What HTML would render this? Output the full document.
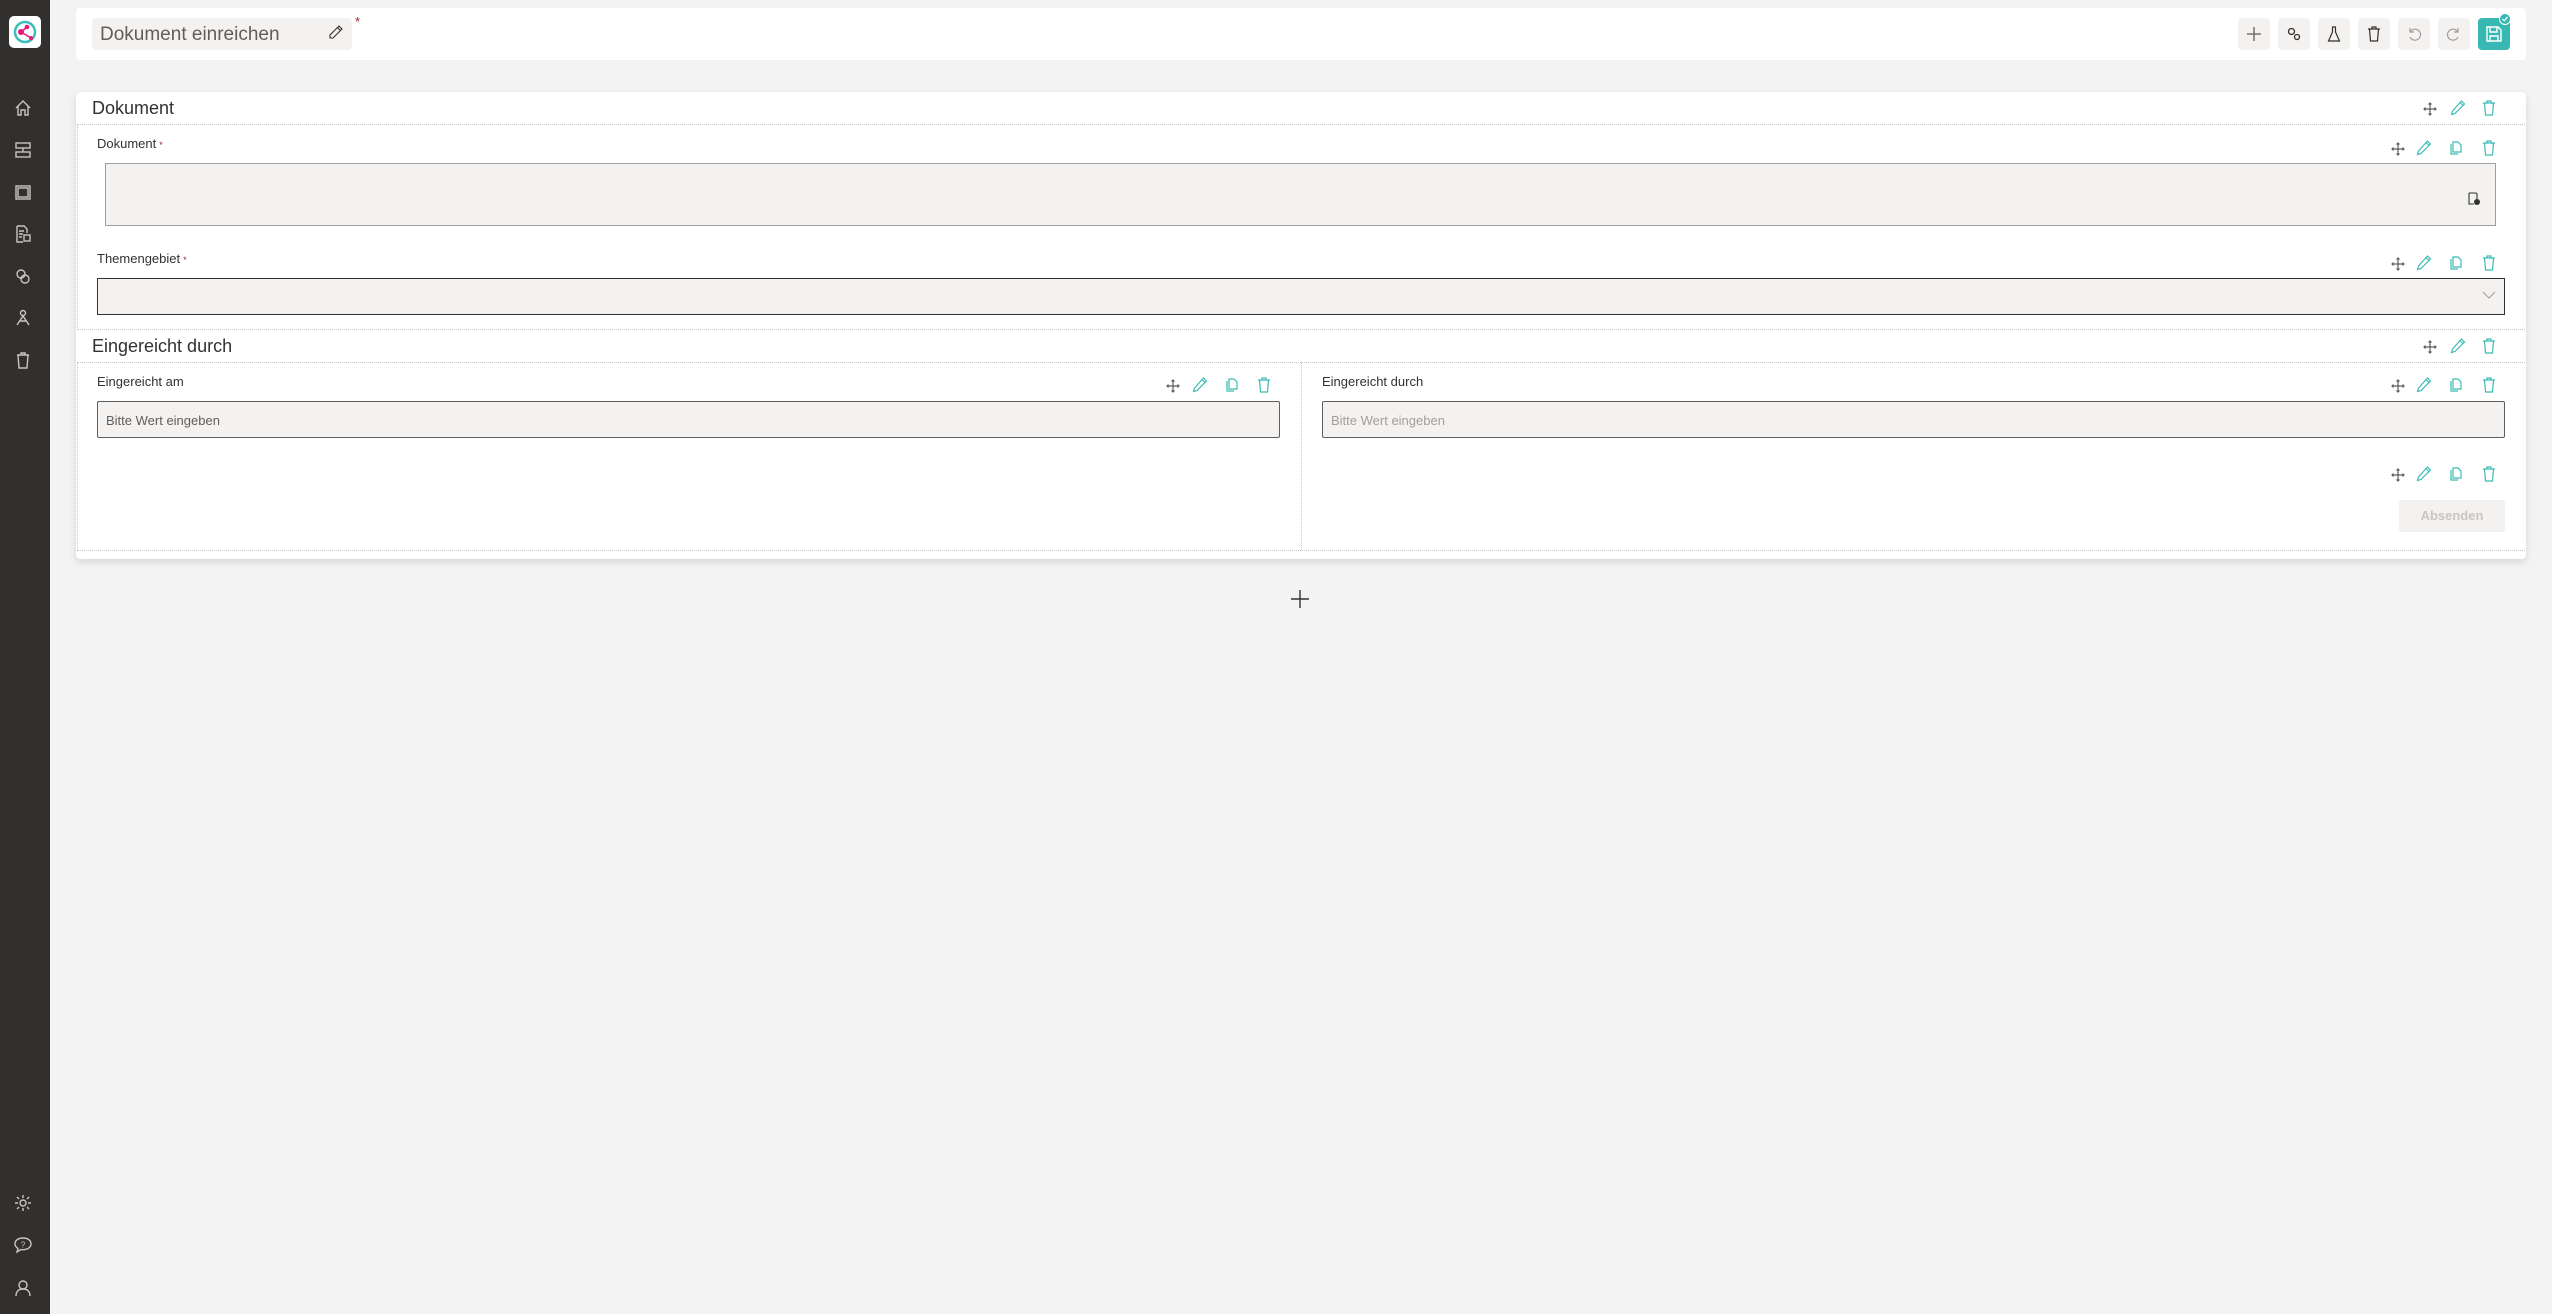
<!DOCTYPE html>
<html><head><meta charset="utf-8">
<style>
*{box-sizing:border-box;margin:0;padding:0}
body{width:2552px;height:1314px;background:#f3f3f3;font-family:"Liberation Sans",sans-serif;position:relative;overflow:hidden;color:#323130}
.abs{position:absolute}
#side{left:0;top:0;width:50px;height:1314px;background:#31302e}
.si{position:absolute;left:13px;width:20px;height:20px}
.tb{position:absolute;top:18px;width:32px;height:32px;border-radius:4px;background:#f3f2f1;display:flex;align-items:center;justify-content:center}
.ic{position:absolute;width:18px;height:18px}
.lbl{position:absolute;font-size:13px;color:#323130}
.req{color:#a4262c;font-size:9px;vertical-align:middle;margin-left:3px}
.dh{position:absolute;height:0;border-top:1px dotted #c8c6c4}
.dv{position:absolute;width:0;border-left:1px dotted #c8c6c4}
</style></head><body>
<div id="side" class="abs">
 <div class="abs" style="left:9px;top:16px;width:32px;height:32px;background:#fff;border-radius:5px">
  <svg width="32" height="32" viewBox="0 0 32 32"><circle cx="16" cy="16" r="10" fill="none" stroke="#3bbfb8" stroke-width="2.5"/><circle cx="12" cy="16" r="3" fill="#e6197a"/><circle cx="18" cy="11" r="2.3" fill="#e6197a"/><circle cx="22" cy="22" r="2" fill="#e6197a"/><path d="M12 16L18 11M12 16L22 22" stroke="#e6197a" stroke-width="1.5"/></svg>
 </div>
 <svg class="si" style="top:98px" viewBox="0 0 20 20" fill="none" stroke="#c8c6c4" stroke-width="1.4"><path d="M3 10L10 3L17 10M5 8V17H8V12H12V17H15V8"/></svg>
 <svg class="si" style="top:140px" viewBox="0 0 20 20" fill="none" stroke="#c8c6c4" stroke-width="1.4"><rect x="3" y="3" width="14" height="5"/><rect x="3" y="12" width="14" height="5"/><path d="M10 8V12"/></svg>
 <svg class="si" style="top:182px" viewBox="0 0 20 20" fill="none" stroke="#c8c6c4" stroke-width="1.4"><rect x="3" y="4" width="14" height="13"/><rect x="5" y="6" width="10" height="9"/></svg>
 <svg class="si" style="top:224px" viewBox="0 0 20 20" fill="none" stroke="#c8c6c4" stroke-width="1.4"><path d="M4 2H11L14 5V9M4 2V18H10M6 7H11M6 10H10M6 13H9"/><rect x="11" y="11" width="6" height="6"/></svg>
 <svg class="si" style="top:266px" viewBox="0 0 20 20" fill="none" stroke="#c8c6c4" stroke-width="1.4"><circle cx="8" cy="8" r="4"/><circle cx="12" cy="13" r="4"/></svg>
 <svg class="si" style="top:308px" viewBox="0 0 20 20" fill="none" stroke="#c8c6c4" stroke-width="1.4"><circle cx="10" cy="5" r="2.5"/><path d="M10 8L4 17M10 8L16 17M7 13H13"/></svg>
 <svg class="si" style="top:350px" viewBox="0 0 20 20" fill="none" stroke="#c8c6c4" stroke-width="1.4"><path d="M4 5H16M8 5V3H12V5M5 5L6 18H14L15 5"/></svg>
 <svg class="si" style="top:1193px" viewBox="0 0 20 20" fill="none" stroke="#c8c6c4" stroke-width="1.4"><circle cx="10" cy="10" r="3"/><path d="M10 2V5M10 15V18M2 10H5M15 10H18M4 4L6 6M14 14L16 16M4 16L6 14M14 6L16 4"/></svg>
 <svg class="si" style="top:1235px" viewBox="0 0 20 20" fill="none" stroke="#c8c6c4" stroke-width="1.4"><path d="M10 3C5 3 2 5.5 2 9C2 11 3.5 12.5 5 13.5L4 17L8 14.5C8.7 14.6 9.3 14.7 10 14.7C15 14.7 18 12 18 9C18 5.5 15 3 10 3Z"/><text x="10" y="12.5" font-size="8" text-anchor="middle" fill="#c8c6c4" stroke="none" font-family="Liberation Sans">?</text></svg>
 <svg class="si" style="top:1278px" viewBox="0 0 20 20" fill="none" stroke="#c8c6c4" stroke-width="1.4"><circle cx="10" cy="7" r="4"/><path d="M3 18C3 13 6 11 10 11C14 11 17 13 17 18"/></svg>
</div>

<!-- header -->
<div class="abs" style="left:76px;top:8px;width:2450px;height:52px;background:#fff;border-radius:4px"></div>
<div class="abs" style="left:92px;top:18px;width:260px;height:32px;background:#f3f2f1;border-radius:4px;font-size:19px;color:#605e5c;padding:6px 0 0 8px">Dokument einreichen</div>
<svg class="abs" style="left:328px;top:24px" width="16" height="16" viewBox="0 0 16 16" fill="none" stroke="#323130" stroke-width="1.1"><path d="M11 2L14 5L5 14L2 14L2 11Z M9.5 3.5L12.5 6.5"/></svg>
<div class="abs" style="left:355px;top:14px;color:#a4262c;font-size:13px">*</div>

<div class="tb" style="left:2238px"><svg width="18" height="18" viewBox="0 0 18 18" stroke="#605e5c" stroke-width="1.3"><path d="M9 2V16M2 9H16"/></svg></div>
<div class="tb" style="left:2278px"><svg width="18" height="18" viewBox="0 0 18 18" fill="none" stroke="#323130" stroke-width="1.3"><circle cx="6.5" cy="6.5" r="3"/><circle cx="12" cy="12" r="2.5"/></svg></div>
<div class="tb" style="left:2318px"><svg width="18" height="18" viewBox="0 0 18 18" fill="none" stroke="#323130" stroke-width="1.2"><path d="M7 2H11M7.5 2V7L3.5 16H14.5L10.5 7V2"/></svg></div>
<div class="tb" style="left:2358px"><svg width="18" height="18" viewBox="0 0 18 18" fill="none" stroke="#323130" stroke-width="1.2"><path d="M3 4H15M7 4V2H11V4M4.5 4L5.5 16H12.5L13.5 4"/></svg></div>
<div class="tb" style="left:2398px"><svg width="18" height="18" viewBox="0 0 18 18" fill="none" stroke="#a19f9d" stroke-width="1.2"><path d="M5 3V7H9M5.5 6.5A5.5 5.5 0 1 1 5 12"/></svg></div>
<div class="tb" style="left:2438px"><svg width="18" height="18" viewBox="0 0 18 18" fill="none" stroke="#a19f9d" stroke-width="1.2"><path d="M13 3V7H9M12.5 6.5A5.5 5.5 0 1 0 13 12"/></svg></div>
<div class="tb" style="left:2478px;background:#38b8b2"><svg width="20" height="20" viewBox="0 0 20 20" fill="none" stroke="#fff" stroke-width="1.4"><path d="M3 3H14L17 6V17H3Z M6 3V8H13V3 M6 17V12H14V17"/></svg></div>
<div class="abs" style="left:2499px;top:13px;width:12px;height:12px;border-radius:6px;background:#38b8b2;border:1px solid #fff"><svg width="10" height="10" viewBox="0 0 10 10" style="display:block" fill="none" stroke="#fff" stroke-width="1.3"><path d="M2.5 5L4.3 6.8L7.5 3"/></svg></div>

<!-- main card -->
<div class="abs" style="left:76px;top:92px;width:2450px;height:467px;background:#fff;border-radius:4px;box-shadow:0 3px 8px rgba(0,0,0,0.12)"></div>
<div class="abs" style="left:92px;top:98px;font-size:18px;color:#323130">Dokument</div>
<div class="dh" style="left:77px;top:124px;width:2448px"></div>
<div class="dv" style="left:77px;top:124px;height:206px"></div>

<div class="lbl" style="left:97px;top:136px">Dokument<span class="req">*</span></div>
<div class="abs" style="left:105px;top:163px;width:2391px;height:63px;background:#f3f2f1;border:1px solid #a19f9d"></div>
<svg class="abs" style="left:2467px;top:192px" width="14" height="14" viewBox="0 0 14 14" fill="none"><path d="M2 1H9L10 2V7M2 1V12H7" stroke="#323130" stroke-width="1.1"/><circle cx="10" cy="10" r="3" fill="#323130"/></svg>

<div class="lbl" style="left:97px;top:251px">Themengebiet<span class="req">*</span></div>
<div class="abs" style="left:97px;top:278px;width:2408px;height:37px;background:#f3f2f1;border:1px solid #323130"></div>
<svg class="abs" style="left:2482px;top:290px" width="14" height="10" viewBox="0 0 14 10" fill="none" stroke="#a19f9d" stroke-width="1"><path d="M1 2L7 8L13 2"/></svg>

<div class="dh" style="left:77px;top:329px;width:2448px"></div>
<div class="abs" style="left:92px;top:336px;font-size:18px;color:#323130">Eingereicht durch</div>
<div class="dh" style="left:77px;top:362px;width:2448px"></div>
<div class="dv" style="left:77px;top:362px;height:188px"></div>
<div class="dv" style="left:1301px;top:362px;height:188px"></div>
<div class="dh" style="left:77px;top:550px;width:2448px"></div>

<div class="lbl" style="left:97px;top:374px">Eingereicht am</div>
<div class="abs" style="left:97px;top:401px;width:1183px;height:37px;background:#f3f2f1;border:1px solid #605e5c;border-radius:2px;font-size:13px;color:#605e5c;padding:11px 0 0 8px">Bitte Wert eingeben</div>
<div class="lbl" style="left:1322px;top:374px">Eingereicht durch</div>
<div class="abs" style="left:1322px;top:401px;width:1183px;height:37px;background:#f3f2f1;border:1px solid #605e5c;border-radius:2px;font-size:13px;color:#a19f9d;padding:11px 0 0 8px">Bitte Wert eingeben</div>

<div class="abs" style="left:2399px;top:500px;width:106px;height:32px;background:#f3f2f1;border-radius:2px;font-size:13px;font-weight:bold;color:#c8c6c4;text-align:center;line-height:32px">Absenden</div>

<div class="abs" style="left:1290px;top:589px;width:20px;height:20px">
<svg width="20" height="20" viewBox="0 0 20 20" stroke="#323130" stroke-width="1.4"><path d="M10 1V19M1 10H19"/></svg></div>

<svg width="0" height="0" style="position:absolute"><defs>
<g id="mv" fill="none" stroke="#605e5c" stroke-width="1.2"><path d="M9 3V15M3 9H15M7.5 4.5L9 3L10.5 4.5M7.5 13.5L9 15L10.5 13.5M4.5 7.5L3 9L4.5 10.5M13.5 7.5L15 9L13.5 10.5"/></g>
<g id="pe" fill="none" stroke="#3bbab4" stroke-width="1.2"><path d="M12.5 2L15.5 5L6 14.5L2.5 15.5L3.5 12Z M11 3.5L14 6.5"/></g>
<g id="cp" fill="none" stroke="#3bbab4" stroke-width="1.2"><path d="M6 3H11L14 6V13H6Z M4 5V15H11"/></g>
<g id="tr" fill="none" stroke="#3bbab4" stroke-width="1.2"><path d="M3 4H15M7 4V2H11V4M4.5 4L5.5 16H12.5L13.5 4"/></g>
</defs></svg>

<svg class="ic" style="left:2421px;top:100px"><use href="#mv"/></svg>
<svg class="ic" style="left:2449px;top:99px"><use href="#pe"/></svg>
<svg class="ic" style="left:2480px;top:99px"><use href="#tr"/></svg>

<svg class="ic" style="left:2389px;top:140px"><use href="#mv"/></svg>
<svg class="ic" style="left:2415px;top:139px"><use href="#pe"/></svg>
<svg class="ic" style="left:2447px;top:139px"><use href="#cp"/></svg>
<svg class="ic" style="left:2480px;top:139px"><use href="#tr"/></svg>

<svg class="ic" style="left:2389px;top:255px"><use href="#mv"/></svg>
<svg class="ic" style="left:2415px;top:254px"><use href="#pe"/></svg>
<svg class="ic" style="left:2447px;top:254px"><use href="#cp"/></svg>
<svg class="ic" style="left:2480px;top:254px"><use href="#tr"/></svg>

<svg class="ic" style="left:2421px;top:338px"><use href="#mv"/></svg>
<svg class="ic" style="left:2449px;top:337px"><use href="#pe"/></svg>
<svg class="ic" style="left:2480px;top:337px"><use href="#tr"/></svg>

<svg class="ic" style="left:1164px;top:377px"><use href="#mv"/></svg>
<svg class="ic" style="left:1191px;top:376px"><use href="#pe"/></svg>
<svg class="ic" style="left:1223px;top:376px"><use href="#cp"/></svg>
<svg class="ic" style="left:1255px;top:376px"><use href="#tr"/></svg>

<svg class="ic" style="left:2389px;top:377px"><use href="#mv"/></svg>
<svg class="ic" style="left:2415px;top:376px"><use href="#pe"/></svg>
<svg class="ic" style="left:2447px;top:376px"><use href="#cp"/></svg>
<svg class="ic" style="left:2480px;top:376px"><use href="#tr"/></svg>

<svg class="ic" style="left:2389px;top:466px"><use href="#mv"/></svg>
<svg class="ic" style="left:2415px;top:465px"><use href="#pe"/></svg>
<svg class="ic" style="left:2447px;top:465px"><use href="#cp"/></svg>
<svg class="ic" style="left:2480px;top:465px"><use href="#tr"/></svg>
</body></html>
